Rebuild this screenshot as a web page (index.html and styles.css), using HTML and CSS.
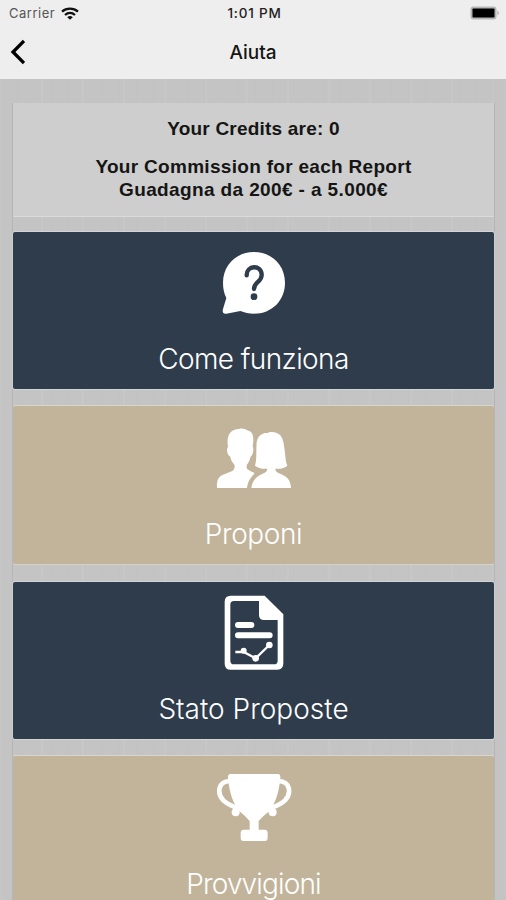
FILE: index.html
```html
<!DOCTYPE html>
<html lang="it">

<head>
    <meta charset="UTF-8">
    <meta name="viewport" content="width=device-width, initial-scale=1.0">
    <title>Aiuta</title>
    <link rel="stylesheet" href="styles.css">
</head>

<body>

    <header>
        <!-- Status bar -->
        <div class="status-bar">
            <div class="carrier">
                <span>Carrier</span>
                <svg class="wifi" viewBox="0 0 18 13" fill="none" stroke="#111" stroke-width="2.3">
                    <path d="M1 4.7C5.500.700 12.500.700 17 4.700" />
                    <path d="M4 8C7 5.300 11 5.300 14 8" />
                    <path d="M9 12.700L6.200 10.200Q9 8 11.800 10.200Z" fill="#111" stroke="none" />
                </svg>
            </div>
            <span class="time">1:01 PM</span>
            <svg class="battery" viewBox="0 0 30 14">
                <rect x="0.500" y="0.500" width="26" height="13" rx="3" fill="#b5b5b5" />
                <rect x="2.500" y="2.500" width="22" height="9" rx="0.800" fill="#000" />
                <path d="M27.500 4.500Q30 7 27.500 9.500Z" fill="#a5a5a5" />
            </svg>
        </div>

        <!-- Navigation bar -->
        <nav class="nav-bar">
            <svg class="back" viewBox="0 0 16 26" fill="none" stroke="#000" stroke-width="3.3">
                <path d="M15 2L4 13L15 24" />
            </svg>
            <h1>Aiuta</h1>
        </nav>
    </header>

    <main>
        <section class="credits">
            <p class="credits-total">Your Credits are: 0</p>
            <p class="commission">Your Commission for each Report</p>
            <p class="range">Guadagna da 200€ - a 5.000€</p>
        </section>

        <div class="menu">
            <a class="card navy">
                <svg class="icon" viewBox="-4 -12 330 288">
                    <path fill="#fff" d="M161 36C215 36 254 76 254 128C254 181 215 221 161 221C146 221 132 218 120 213L78 221C69 223 65 215 68 207L78 174C71 160 68 145 68 128C68 76 107 36 161 36Z" />
                    <path fill="none" stroke="#2f3c4c" stroke-width="13" stroke-linecap="round" d="M139 106C138 75 183 73 184 104C185 127 161 124 161 147" />
                    <circle cx="161" cy="170" r="10" fill="#2f3c4c" />
                </svg>
                <span class="label funziona">Come funziona</span>
            </a>

            <a class="card sand">
                <svg class="icon" viewBox="-4 -15 330 288" fill="#fff">
                    <path d="M50 216C49 190 55 181 72 175L96 165Q104 160 103 148Q92 137 89 121C81 118 77 99 83 93C78 60 87 39 119 38C130 36 137 41 144 44C158 46 162 66 157 91C162 100 157 119 151 122Q148 137 139 148V157Q144 164 163 171C154 184 143 191 140 216Z" />
                    <path d="M153 216C155 194 169 180 187 173Q201 168 201 158C186 160 173 156 164 149C170 132 167 103 169 78C173 56 190 49 202 51C211 45 232 48 241 59C256 78 252 131 261 149C251 157 239 159 225 158Q224 168 239 173C260 181 271 191 272 216Z" />
                </svg>
                <span class="label proponi">Proponi</span>
            </a>

            <a class="card navy">
                <svg class="icon" viewBox="-4 3 330 288">
                    <path fill="#fff" fill-rule="evenodd" d="M91 32H193L249 88V235Q249 254 231 254H91Q73 254 73 236V50Q73 32 91 32ZM101 48Q90 48 90 59V227Q90 238 101 238H221Q232 238 232 227V105H191Q176 105 176 90V48Z" />
                    <path fill="none" stroke="#fff" stroke-width="18" stroke-linecap="round" d="M113 120H153M113 151H208" />
                    <path fill="none" stroke="#fff" stroke-width="7" d="M105 201H130L166 220L207 180" />
                    <circle cx="130" cy="197" r="9" fill="#fff" />
                    <circle cx="166" cy="220" r="10" fill="#fff" />
                    <circle cx="207" cy="180" r="10" fill="#fff" />
                </svg>
                <span class="label stato">Stato Proposte</span>
            </a>

            <a class="card sand">
                <svg class="icon" viewBox="-4 3 330 288" fill="#fff">
                    <path d="M90 42H233Q241 42 240 55C236 97 225 133 205 155Q187 168 175 183V209H192Q202 209 202 219V233Q202 243 192 243H131Q121 243 121 233V219Q121 209 131 209H148V183Q136 168 119 155C98 133 87 97 83 55Q82 42 90 42Z" />
                    <path fill="none" stroke="#fff" stroke-width="14" d="M88 63C53 64 49 100 69 121Q86 137 123 148M235 63C270 64 274 100 254 121Q237 137 200 148" />
                    <circle cx="106" cy="157" r="12" />
                    <circle cx="217" cy="157" r="12" />
                </svg>
                <span class="label provvigioni">Provvigioni</span>
            </a>
        </div>
    </main>

</body>

</html>
```

FILE: styles.css
```css
* {
    box-sizing: border-box;
}

body {
    margin: 0;
    height: 900px;
    overflow: hidden;
    font-family: "Liberation Sans", Arial, sans-serif;
    color: #151515;
    /* Brushed light wood */
    background:
        repeating-linear-gradient(90deg, rgba(0, 0, 0, 0.012) 0 1px, transparent 1px 17px),
        repeating-linear-gradient(90deg, rgba(255, 255, 255, 0.05) 0 2px, transparent 2px 41px),
        #c4c4c4;
}

/* Header */
header {
    height: 79px;
    background: #eee;
}

.status-bar {
    display: grid;
    grid-template-columns: 1fr auto 1fr;
    align-items: center;
    height: 26px;
    padding: 0 6px 0 9px;
    font-family: Inter, sans-serif;
    font-size: 13px;
}

.carrier {
    display: flex;
    align-items: center;
    gap: 6px;
    color: #555;
    letter-spacing: 0.5px;
}

.wifi {
    width: 18px;
    height: 13px;
}

.time {
    color: #222;
    font-weight: 500;
    font-size: 13.5px;
    letter-spacing: 0.8px;
}

.battery {
    width: 30px;
    height: 14px;
    justify-self: end;
}

.nav-bar {
    display: grid;
    grid-template-columns: 1fr auto 1fr;
    align-items: center;
    height: 52px;
    padding: 0 9px;
}

.back {
    width: 16px;
    height: 26px;
}

h1 {
    margin: 0;
    font-family: Inter, sans-serif;
    font-size: 19px;
    font-weight: 500;
}

/* Content */
main {
    margin: 24px 11px 0 12px;
    border-left: 1px solid #b5b5b5;
    border-right: 1px solid #b5b5b5;
}

.credits {
    height: 114px;
    padding-top: 14px;
    background: #cecece;
    border-bottom: 1px solid #dadada;
    text-align: center;
    font-size: 19px;
    font-weight: bold;
    line-height: 23px;
}

.credits p {
    margin: 0;
}

.credits .credits-total {
    margin-bottom: 15px;
    letter-spacing: 0.2px;
}

.commission {
    letter-spacing: 0.3px;
}

.range {
    letter-spacing: 0.38px;
}

/* Menu cards */
.menu {
    display: flex;
    flex-direction: column;
    gap: 17px;
    padding-top: 15px;
}

.card {
    display: flex;
    flex-direction: column;
    align-items: center;
    flex: none;
    height: 157px;
    padding-top: 4px;
    color: #fff;
    border-radius: 2px;
}

.navy {
    background: #2f3c4c;
    box-shadow: 0 0 0 1px rgba(225, 228, 230, 0.5);
}

.sand {
    height: 158px;
    margin-bottom: 1px;
    padding-top: 5px;
    background: #c2b49a;
    box-shadow: 0 -1px 0 #d9d5cc, 0 1px 0 #d4d0c8;
}

.icon {
    width: 110px;
    height: 96px;
}

.label {
    font-family: Inter, sans-serif;
    font-size: 28px;
    font-weight: 300;
    line-height: 54px;
}

.funziona {
    letter-spacing: -0.6px;
}

.proponi {
    letter-spacing: -0.4px;
}

.provvigioni {
    letter-spacing: -0.85px;
}
```
